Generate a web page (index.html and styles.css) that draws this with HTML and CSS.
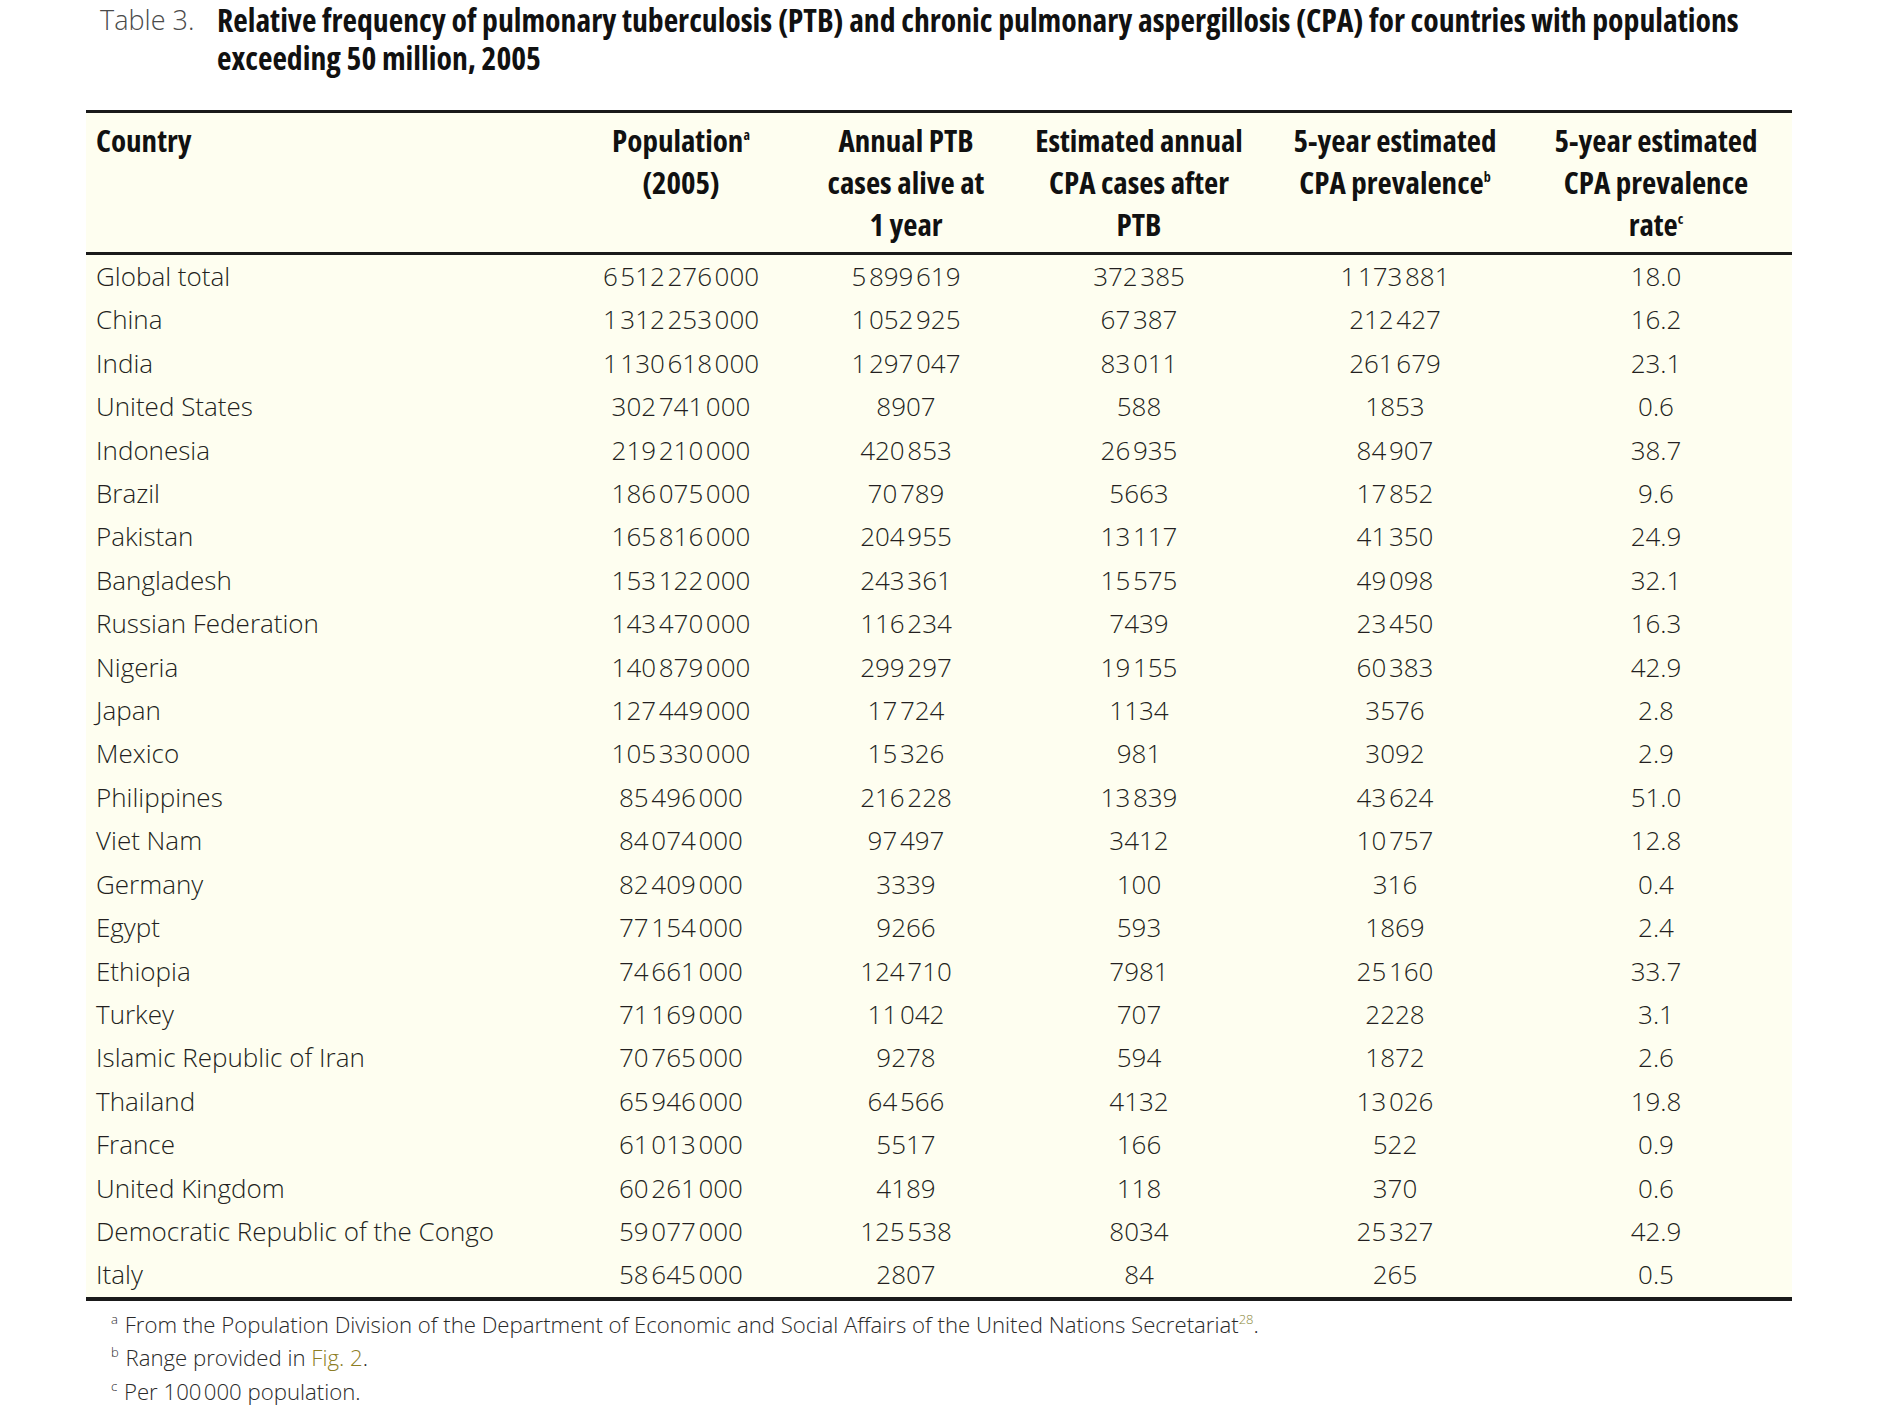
FILE: index.html
```html
<!DOCTYPE html>
<html lang="en">
<head>
<meta charset="utf-8">
<title>Table 3</title>
<link rel="stylesheet" href="styles.css">
</head>
<body>
<div class="page">
  <div class="caption">
    <div class="cap-label">Table 3.</div>
    <div class="cap-text">Relative frequency of pulmonary tuberculosis (PTB) and chronic pulmonary aspergillosis (CPA) for countries with populations<br>exceeding 50 million, 2005</div>
  </div>

  <table class="tbl">
    <colgroup>
      <col class="c1"><col class="c2"><col class="c3"><col class="c4"><col class="c5"><col class="c6">
    </colgroup>
    <thead>
      <tr>
        <th class="left">Country</th>
        <th>Population<sup class="hs">a</sup><br>(2005)</th>
        <th>Annual PTB<br>cases alive at<br>1 year</th>
        <th>Estimated annual<br>CPA cases after<br>PTB</th>
        <th>5-year estimated<br>CPA prevalence<sup class="hs">b</sup></th>
        <th>5-year estimated<br>CPA prevalence<br>rate<sup class="hs">c</sup></th>
      </tr>
    </thead>
    <tbody>
      <tr><td class="left">Global total</td><td>6&#8202;512&#8202;276&#8202;000</td><td>5&#8202;899&#8202;619</td><td>372&#8202;385</td><td>1&#8202;173&#8202;881</td><td>18.0</td></tr>
      <tr><td class="left">China</td><td>1&#8202;312&#8202;253&#8202;000</td><td>1&#8202;052&#8202;925</td><td>67&#8202;387</td><td>212&#8202;427</td><td>16.2</td></tr>
      <tr><td class="left">India</td><td>1&#8202;130&#8202;618&#8202;000</td><td>1&#8202;297&#8202;047</td><td>83&#8202;011</td><td>261&#8202;679</td><td>23.1</td></tr>
      <tr><td class="left">United States</td><td>302&#8202;741&#8202;000</td><td>8907</td><td>588</td><td>1853</td><td>0.6</td></tr>
      <tr><td class="left">Indonesia</td><td>219&#8202;210&#8202;000</td><td>420&#8202;853</td><td>26&#8202;935</td><td>84&#8202;907</td><td>38.7</td></tr>
      <tr><td class="left">Brazil</td><td>186&#8202;075&#8202;000</td><td>70&#8202;789</td><td>5663</td><td>17&#8202;852</td><td>9.6</td></tr>
      <tr><td class="left">Pakistan</td><td>165&#8202;816&#8202;000</td><td>204&#8202;955</td><td>13&#8202;117</td><td>41&#8202;350</td><td>24.9</td></tr>
      <tr><td class="left">Bangladesh</td><td>153&#8202;122&#8202;000</td><td>243&#8202;361</td><td>15&#8202;575</td><td>49&#8202;098</td><td>32.1</td></tr>
      <tr><td class="left">Russian Federation</td><td>143&#8202;470&#8202;000</td><td>116&#8202;234</td><td>7439</td><td>23&#8202;450</td><td>16.3</td></tr>
      <tr><td class="left">Nigeria</td><td>140&#8202;879&#8202;000</td><td>299&#8202;297</td><td>19&#8202;155</td><td>60&#8202;383</td><td>42.9</td></tr>
      <tr><td class="left">Japan</td><td>127&#8202;449&#8202;000</td><td>17&#8202;724</td><td>1134</td><td>3576</td><td>2.8</td></tr>
      <tr><td class="left">Mexico</td><td>105&#8202;330&#8202;000</td><td>15&#8202;326</td><td>981</td><td>3092</td><td>2.9</td></tr>
      <tr><td class="left">Philippines</td><td>85&#8202;496&#8202;000</td><td>216&#8202;228</td><td>13&#8202;839</td><td>43&#8202;624</td><td>51.0</td></tr>
      <tr><td class="left">Viet Nam</td><td>84&#8202;074&#8202;000</td><td>97&#8202;497</td><td>3412</td><td>10&#8202;757</td><td>12.8</td></tr>
      <tr><td class="left">Germany</td><td>82&#8202;409&#8202;000</td><td>3339</td><td>100</td><td>316</td><td>0.4</td></tr>
      <tr><td class="left">Egypt</td><td>77&#8202;154&#8202;000</td><td>9266</td><td>593</td><td>1869</td><td>2.4</td></tr>
      <tr><td class="left">Ethiopia</td><td>74&#8202;661&#8202;000</td><td>124&#8202;710</td><td>7981</td><td>25&#8202;160</td><td>33.7</td></tr>
      <tr><td class="left">Turkey</td><td>71&#8202;169&#8202;000</td><td>11&#8202;042</td><td>707</td><td>2228</td><td>3.1</td></tr>
      <tr><td class="left">Islamic Republic of Iran</td><td>70&#8202;765&#8202;000</td><td>9278</td><td>594</td><td>1872</td><td>2.6</td></tr>
      <tr><td class="left">Thailand</td><td>65&#8202;946&#8202;000</td><td>64&#8202;566</td><td>4132</td><td>13&#8202;026</td><td>19.8</td></tr>
      <tr><td class="left">France</td><td>61&#8202;013&#8202;000</td><td>5517</td><td>166</td><td>522</td><td>0.9</td></tr>
      <tr><td class="left">United Kingdom</td><td>60&#8202;261&#8202;000</td><td>4189</td><td>118</td><td>370</td><td>0.6</td></tr>
      <tr><td class="left">Democratic Republic of the Congo</td><td>59&#8202;077&#8202;000</td><td>125&#8202;538</td><td>8034</td><td>25&#8202;327</td><td>42.9</td></tr>
      <tr><td class="left">Italy</td><td>58&#8202;645&#8202;000</td><td>2807</td><td>84</td><td>265</td><td>0.5</td></tr>
    </tbody>
  </table>

  <div class="notes">
    <p class="note"><sup class="fs">a</sup> From the Population Division of the Department of Economic and Social Affairs of the United Nations Secretariat<sup class="ref">28</sup>.</p>
    <p class="note"><sup class="fs">b</sup> Range provided in <span class="link">Fig. 2</span>.</p>
    <p class="note"><sup class="fs">c</sup> Per 100&#8202;000 population.</p>
  </div>
</div>
</body>
</html>
```
FILE: styles.css
```css
html, body {
  margin: 0;
  padding: 0;
  background: #ffffff;
}

body {
  font-family: "Open Sans", "Liberation Sans", sans-serif;
  color: #231f20;
}

.page {
  padding: 1px 98px 0 86px;
}

/* caption */
.caption {
  display: flex;
  margin: 0 0 33px 14px;
  line-height: 38px;
}

.cap-label {
  flex: none;
  width: 117px;
  font-weight: 300;
  font-size: 27px;
  color: #4a4a4a;
}

.cap-text {
  font-weight: 700;
  font-stretch: 75%;
  font-size: 31.7px;
  letter-spacing: 0;
  white-space: nowrap;
  color: #111;
}

/* table */
.tbl {
  width: 1706px;
  border-collapse: collapse;
  table-layout: fixed;
  border-top: 3px solid #1a1a1a;
  border-bottom: 4px solid #1a1a1a;
}

.c1 { width: 472px; }
.c2 { width: 246px; }
.c3 { width: 204px; }
.c4 { width: 262px; }
.c5 { width: 250px; }
.c6 { width: 272px; }

.tbl th {
  background: #fefef0;
  font-weight: 700;
  font-stretch: 75%;
  font-size: 31px;
  letter-spacing: 0;
  line-height: 42px;
  padding: 6px 0 7px;
  text-align: center;
  vertical-align: top;
  border-bottom: 3px solid #1a1a1a;
  color: #111;
}

.tbl td {
  background: #fefef0;
  font-weight: 300;
  font-size: 26px;
  height: 43.4px;
  line-height: 43.4px;
  padding: 0;
  text-align: center;
  white-space: nowrap;
}

.tbl th.left,
.tbl td.left {
  text-align: left;
  padding-left: 10px;
}

.hs {
  font-size: 14px;
  line-height: 0;
  vertical-align: 12px;
}

/* notes */
.notes {
  padding: 7px 0 0 25px;
}

.note {
  margin: 0;
  font-weight: 300;
  font-size: 22.2px;
  line-height: 33.5px;
  color: #2a2a2a;
}

.fs {
  font-size: 13px;
  line-height: 0;
  vertical-align: 9px;
  margin-right: 1px;
}

.ref {
  font-size: 13px;
  line-height: 0;
  vertical-align: 9px;
  color: #8c8a3a;
}

.link {
  color: #8c7d24;
}
```
